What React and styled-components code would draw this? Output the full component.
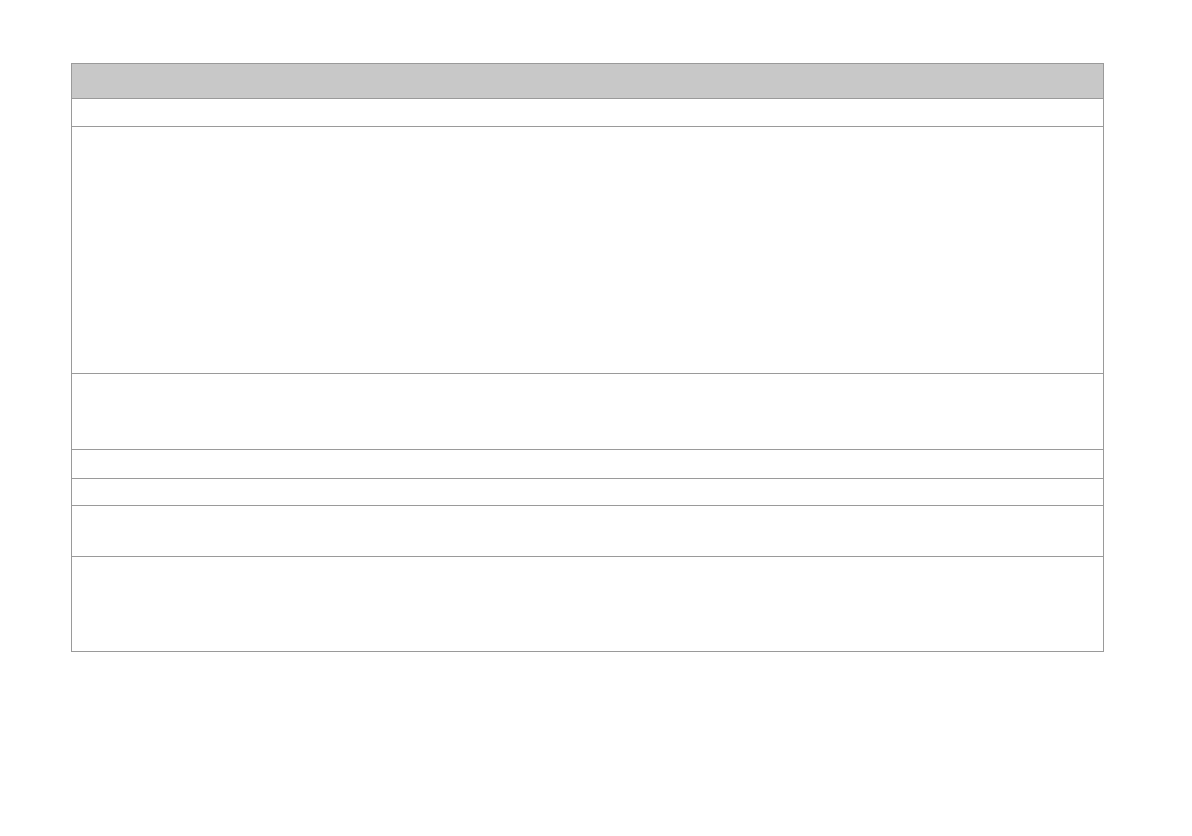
import React from "react";
import styled, { createGlobalStyle } from "styled-components";

const GlobalStyle = createGlobalStyle`
  html, body {
    margin: 0;
    padding: 0;
    background: #ffffff;
  }
  body {
    font-family: "Liberation Sans", Arial, sans-serif;
    font-size: 13px;
    color: #222;
  }
`;

// content heights between the grid lines, in order
const rows = [27, 246, 75, 28, 26, 50, 94];

export default function App() {
  return (
    <>
      <GlobalStyle />
      <Page>
        <Grid>
          <HeaderRow />
          {rows.map((h, i) => (
            <Row key={i} $height={h} />
          ))}
        </Grid>
      </Page>
    </>
  );
}

const Page = styled.div`
  padding: 63px 0 0 71px;
`;
const Grid = styled.div`
  width: 1033px;
  box-sizing: border-box;
  border: 1px solid #9a9a9a;
  display: flex;
  flex-direction: column;
`;
const HeaderRow = styled.div`
  height: 34px;
  background-color: #c8c8c8;
`;
const Row = styled.div`
  box-sizing: border-box;
  height: ${(p) => p.$height + 1}px;
  border-top: 1px solid #9a9a9a;
  background-color: #ffffff;
`;
